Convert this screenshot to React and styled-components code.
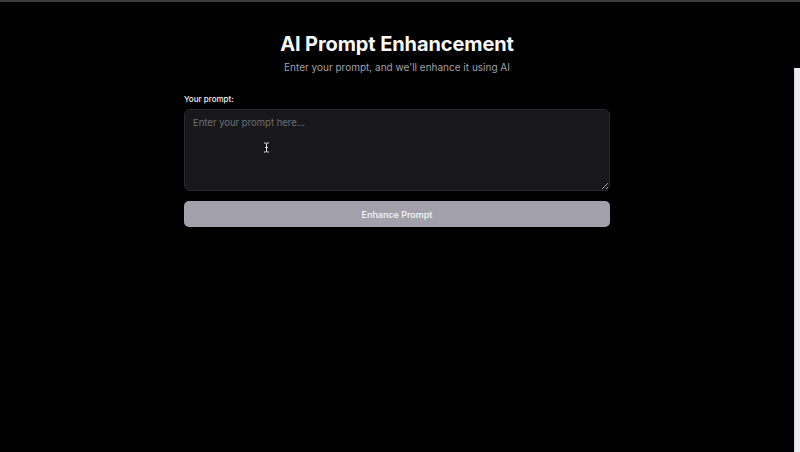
import React from 'react';
import styled, { createGlobalStyle } from 'styled-components';

const GlobalStyle = createGlobalStyle`
  html, body {
    margin: 0;
    padding: 0;
    background: #000;
  }
  body {
    font-family: Inter, "Noto Sans", sans-serif;
    color: #fafafa;
  }
  * { box-sizing: border-box; }
`;

const Page = styled.div`
  height: 452px;
  display: flex;
  flex-direction: column;
  overflow: hidden;
`;

const TopBar = styled.div`
  height: 2px;
  background: #3b3b3d;
  flex-shrink: 0;
`;

const Body = styled.div`
  flex: 1;
  display: flex;
`;

const Main = styled.main`
  flex: 1;
  display: flex;
  flex-direction: column;
  align-items: center;
  padding-top: 29px;
`;

const ScrollTrack = styled.div`
  width: 6px;
  display: flex;
  flex-direction: column;
  padding-top: 66px;
`;

const ScrollThumb = styled.div`
  flex: 1;
  background: #ececf0;
  border-left: 1px solid #d8d8de;
`;

const Title = styled.h1`
  margin: 0;
  font-size: 20px;
  line-height: 26px;
  font-weight: 700;
  letter-spacing: -0.1px;
`;

const Subtitle = styled.p`
  margin: 3px 0 0;
  font-size: 10px;
  line-height: 14px;
  color: #a1a1aa;
`;

const Form = styled.div`
  width: 426px;
  margin-top: 19px;
  display: flex;
  flex-direction: column;
`;

const Label = styled.label`
  font-size: 8px;
  font-weight: 500;
  line-height: 12px;
  color: #f4f4f5;
  margin-bottom: 4px;
`;

const FieldWrap = styled.div`
  position: relative;
`;

const TextArea = styled.textarea`
  display: block;
  width: 100%;
  height: 82px;
  resize: vertical;
  background: #18181b;
  border: 1px solid #2a2a2e;
  border-radius: 6px;
  padding: 7px 8px;
  font-family: Inter, "Noto Sans", sans-serif;
  font-size: 9.5px;
  color: #e4e4e7;
  outline: none;

  &::placeholder {
    color: #6e6e76;
  }
`;

const Cursor = styled.svg`
  position: absolute;
  left: 79px;
  top: 33px;
  pointer-events: none;
`;

const Button = styled.button`
  margin-top: 10px;
  height: 26px;
  border: none;
  border-radius: 5px;
  background: #a2a1ab;
  color: #fafafa;
  font-family: Inter, "Noto Sans", sans-serif;
  font-size: 9px;
  font-weight: 500;
  cursor: pointer;
`;

export default function App() {
  return (
    <>
      <GlobalStyle />
      <Page>
        <TopBar />
        <Body>
          <Main>
            <Title>AI Prompt Enhancement</Title>
            <Subtitle>Enter your prompt, and we'll enhance it using AI</Subtitle>
            <Form>
              <Label htmlFor="prompt">Your prompt:</Label>
              <FieldWrap>
                <TextArea id="prompt" placeholder="Enter your prompt here..." />
                <Cursor width="7" height="11" viewBox="0 0 7 11">
                  <path
                    d="M1 1h2l0.5 0.5L4 1h2M3.5 1.5v8M1 10h2l0.5-0.5L4 10h2M2 5.5h3"
                    stroke="#111"
                    strokeWidth="2"
                    fill="none"
                  />
                  <path
                    d="M1 1h2l0.5 0.5L4 1h2M3.5 1.5v8M1 10h2l0.5-0.5L4 10h2M2 5.5h3"
                    stroke="#e5e5e5"
                    strokeWidth="1"
                    fill="none"
                  />
                </Cursor>
              </FieldWrap>
              <Button>Enhance Prompt</Button>
            </Form>
          </Main>
          <ScrollTrack>
            <ScrollThumb />
          </ScrollTrack>
        </Body>
      </Page>
    </>
  );
}
